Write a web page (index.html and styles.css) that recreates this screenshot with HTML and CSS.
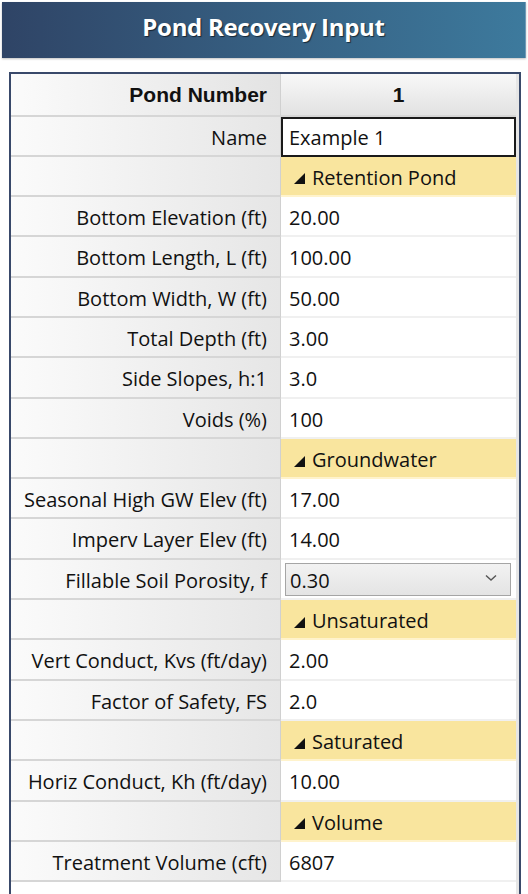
FILE: index.html
```html
<!DOCTYPE html>
<html>
<head>
<meta charset="utf-8">
<link rel="stylesheet" href="styles.css">
</head>
<body>
<div class="title-bar"><h1 class="title">Pond Recovery Input</h1></div>
<div class="grid-frame">
  <div class="grid">
    <div class="label head">Pond Number</div>
    <div class="value head-val">1</div>

    <div class="label">Name</div>
    <div class="value text-input">Example 1</div>

    <div class="label"></div>
    <div class="value section"><svg class="tri" width="11" height="11" viewBox="0 0 11 11"><polygon points="11,0 11,11 0,11" fill="#111"/></svg>Retention Pond</div>

    <div class="label">Bottom Elevation (ft)</div>
    <div class="value">20.00</div>

    <div class="label">Bottom Length, L (ft)</div>
    <div class="value">100.00</div>

    <div class="label">Bottom Width, W (ft)</div>
    <div class="value">50.00</div>

    <div class="label">Total Depth (ft)</div>
    <div class="value">3.00</div>

    <div class="label">Side Slopes, h:1</div>
    <div class="value">3.0</div>

    <div class="label">Voids (%)</div>
    <div class="value">100</div>

    <div class="label"></div>
    <div class="value section"><svg class="tri" width="11" height="11" viewBox="0 0 11 11"><polygon points="11,0 11,11 0,11" fill="#111"/></svg>Groundwater</div>

    <div class="label">Seasonal High GW Elev (ft)</div>
    <div class="value">17.00</div>

    <div class="label">Imperv Layer Elev (ft)</div>
    <div class="value">14.00</div>

    <div class="label">Fillable Soil Porosity, f</div>
    <div class="value combo-cell">
      <div class="combo"><span>0.30</span><svg class="chev" width="12" height="8" viewBox="0 0 12 8"><polyline points="1,1.5 6,6 11,1.5" fill="none" stroke="#555" stroke-width="1.4"/></svg></div>
    </div>

    <div class="label"></div>
    <div class="value section"><svg class="tri" width="11" height="11" viewBox="0 0 11 11"><polygon points="11,0 11,11 0,11" fill="#111"/></svg>Unsaturated</div>

    <div class="label">Vert Conduct, Kvs (ft/day)</div>
    <div class="value">2.00</div>

    <div class="label">Factor of Safety, FS</div>
    <div class="value">2.0</div>

    <div class="label"></div>
    <div class="value section"><svg class="tri" width="11" height="11" viewBox="0 0 11 11"><polygon points="11,0 11,11 0,11" fill="#111"/></svg>Saturated</div>

    <div class="label">Horiz Conduct, Kh (ft/day)</div>
    <div class="value">10.00</div>

    <div class="label"></div>
    <div class="value section"><svg class="tri" width="11" height="11" viewBox="0 0 11 11"><polygon points="11,0 11,11 0,11" fill="#111"/></svg>Volume</div>

    <div class="label">Treatment Volume (cft)</div>
    <div class="value">6807</div>
  </div>
</div>
</body>
</html>
```
FILE: styles.css
```css
* { box-sizing: border-box; }
html, body { margin: 0; padding: 0; background: #fff; }
body {
  font-family: "Open Sans", "Noto Sans", sans-serif;
  color: #111;
  padding: 2px 2px 0 2px;
  overflow: hidden;
}
.title-bar {
  height: 56px;
  padding-bottom: 8px;
  background: linear-gradient(to right, #2f4466, #3d7a9d);
  border-right: 1px solid #6f9bb8;
  box-shadow: 0 1px 2px rgba(0,0,0,0.25);
  display: flex;
  align-items: center;
  justify-content: center;
}
.title {
  margin: 0;
  color: #fff;
  font-size: 24px;
  font-weight: 700;
  letter-spacing: -0.3px;
  text-shadow: 1px 1px 1px rgba(0,0,0,0.6);
}
.grid-frame {
  margin: 14px 5px 0 7px;
  border: 2px solid #39496a;
  border-bottom: none;
  padding: 0 3px 40px 0;
  background: #fff;
  width: 512px;
  box-shadow: inset -3px 0 0 #e6e6e6;
}
.grid {
  display: grid;
  grid-template-columns: 270px 235px;
  grid-auto-rows: 40.3px;
  grid-template-rows: 42.5px;
}
.label {
  background: linear-gradient(to right, #fbfbfb, #e6e6e6);
  border-bottom: 2px solid #d6d6d6;
  border-right: 1px solid #d0d0d0;
  text-align: right;
  padding-right: 13px;
  padding-top: 2px;
  font-size: 20px;
  line-height: 38px;
  white-space: nowrap;
}
.value {
  border-bottom: 2px solid #f0f0f0;
  padding-left: 8px;
  padding-top: 2px;
  font-size: 20px;
  line-height: 38px;
  white-space: nowrap;
}
.head {
  font-family: "Liberation Sans", Arial, sans-serif;
  font-weight: 700;
  font-size: 21px;
  padding-top: 0;
  line-height: 42px;
  background: linear-gradient(to right, #fbfbfb, #e3e3e3);
}
.head-val {
  font-family: "Liberation Sans", Arial, sans-serif;
  font-weight: 700;
  font-size: 21px;
  padding-top: 0;
  line-height: 42px;
  text-align: center;
  padding-left: 0;
  background: linear-gradient(to bottom, #f8f8f8, #e2e2e2);
  border-bottom: 2px solid #d6d6d6;
}
.text-input {
  border: 2px solid #1a1a1a;
  padding-top: 1px;
  line-height: 36px;
  padding-left: 6px;
}
.section {
  background: #f9e59e;
  border-bottom: 2px solid #fff3cc;
  padding-left: 13px;
  padding-top: 4px;
  display: flex;
  align-items: center;
  gap: 7px;
}
.tri { flex: none; margin-top: 2px; }
.combo-cell {
  padding: 3px 5px 4px 4px;
}
.combo {
  height: 33px;
  border: 1px solid #a5a5a5;
  background: linear-gradient(to bottom, #f2f2f2, #e4e4e4);
  display: flex;
  align-items: center;
  justify-content: space-between;
  padding: 2px 13px 0 4px;
  line-height: 31px;
}
.chev { flex: none; margin-top: -5px; }
```
